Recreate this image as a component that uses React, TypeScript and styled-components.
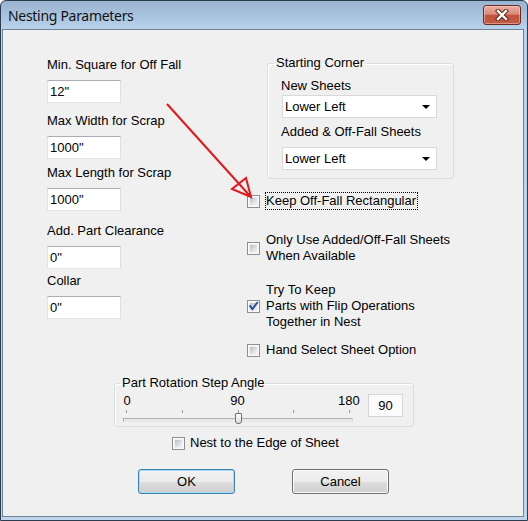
import React from "react";
import styled, { createGlobalStyle } from "styled-components";

const GlobalStyle = createGlobalStyle`
  html, body { margin: 0; padding: 0; background: #ffffff; }
  body { overflow: hidden; }
`;

const Window = styled.div`
  box-sizing: border-box;
  width: 528px;
  height: 521px;
  display: flex;
  flex-direction: column;
  padding: 0 3px 3px 1px;
  border: 1px solid #2d3c4e;
  border-radius: 6px 6px 0 0;
  background: linear-gradient(to bottom, #99b4d1 0px, #b9d1ea 28px, #bfd5ec 100%);
  font-family: "Liberation Sans", Arial, sans-serif;
  font-size: 13px;
  color: #000;
`;

const TitleBar = styled.div`
  flex: none;
  height: 28px;
  display: flex;
  align-items: flex-start;
  justify-content: space-between;
  padding: 0 3px 0 6px;
`;

const TitleText = styled.span`
  font-family: "Noto Sans", "Segoe UI", sans-serif;
  font-size: 14px;
  letter-spacing: -0.3px;
  line-height: 20px;
  margin-top: 5px;
  color: #111;
`;

const CloseButton = styled.div`
  box-sizing: border-box;
  width: 38px;
  height: 20px;
  margin-top: 4px;
  border: 1px solid #6b2a22;
  border-radius: 3px;
  background: linear-gradient(to bottom, #eab0a2 0%, #d98b7a 45%, #c4523c 52%, #c45c44 100%);
  box-shadow: inset 0 0 0 1px rgba(255, 220, 210, 0.45);
  display: flex;
  align-items: center;
  justify-content: center;
`;

const Body = styled.div`
  position: relative;
  flex: 1;
  display: flex;
  flex-direction: column;
  background: #f0f0f0;
  border: 1px solid #6f8399;
`;

const TopSection = styled.div`
  display: flex;
  align-items: flex-start;
  padding-left: 44px;
`;

const LeftColumn = styled.div`
  width: 200px;
  display: flex;
  flex-direction: column;
`;

const Field = styled.div<{ $top: number }>`
  display: flex;
  flex-direction: column;
  align-items: flex-start;
  margin-top: ${(p) => p.$top}px;
`;

const Label = styled.span<{ $gap?: number; $top?: number }>`
  line-height: 16px;
  white-space: nowrap;
  margin-top: ${(p) => p.$top ?? 0}px;
  margin-bottom: ${(p) => p.$gap ?? 7}px;
`;

const TextBox = styled.input`
  box-sizing: border-box;
  width: 74px;
  height: 23px;
  margin: 0;
  padding: 0 2px;
  border: 1px solid;
  border-color: #abadb3 #dbdfe6 #e3e9ef #e2e3ea;
  background: #fff;
  font-family: inherit;
  font-size: 13px;
  color: #000;
  outline: none;
`;

const RightColumn = styled.div`
  display: flex;
  flex-direction: column;
  padding-top: 25px;
`;

const Group = styled.fieldset<{ $width: number }>`
  box-sizing: border-box;
  width: ${(p) => p.$width}px;
  margin: 0;
  padding: 0;
  min-width: 0;
  border: 1px solid #d5dfe5;
  border-radius: 3px;
  box-shadow: inset 1px 1px 0 #ffffff;
`;

const Legend = styled.legend<{ $indent: number }>`
  margin-left: ${(p) => p.$indent}px;
  padding: 0 2px;
  line-height: 16px;
  white-space: nowrap;
`;

const CornerGroup = styled(Group)`
  margin-left: 20px;
`;

const CornerBody = styled.div`
  display: flex;
  flex-direction: column;
  align-items: flex-start;
  padding: 7px 0 8px 13px;
`;

const Select = styled.div<{ $top: number }>`
  box-sizing: border-box;
  width: 155px;
  height: 23px;
  margin: ${(p) => p.$top}px 0 0 1px;
  padding: 0 6px 0 2px;
  border: 1px solid #d9d9d9;
  background: #fff;
  display: flex;
  align-items: center;
  justify-content: space-between;
  line-height: 16px;
`;

const DropArrow = styled.span`
  width: 0;
  height: 0;
  border-left: 4px solid transparent;
  border-right: 4px solid transparent;
  border-top: 4px solid #000;
  margin-top: 1px;
`;

const CheckRow = styled.div<{ $top: number; $indent?: number; $gap?: number }>`
  display: flex;
  align-items: center;
  margin-top: ${(p) => p.$top}px;
  margin-left: ${(p) => p.$indent ?? 0}px;

  & > span:last-child {
    margin-left: ${(p) => p.$gap ?? 5}px;
  }
`;

const Box = styled.span`
  position: relative;
  box-sizing: border-box;
  flex: none;
  width: 13px;
  height: 13px;
  padding: 2px;
  border: 1px solid #8e8f8f;
  background: linear-gradient(135deg, #b9bec5 0%, #dcdfe3 55%, #f4f4f4 100%) content-box, #f2f2f2;
  box-shadow: inset 0 0 0 1px #fafafa;

  & > svg {
    position: absolute;
    left: -1px;
    top: -1px;
  }
`;

const CheckText = styled.span<{ $focused?: boolean }>`
  line-height: 16px;
  white-space: nowrap;
  border: 1px dotted ${(p) => (p.$focused ? "#000" : "transparent")};
  padding-right: 1px;
`;

const SliderGroup = styled(Group)`
  margin: 16px 0 0 111px;
`;

const SliderBody = styled.div`
  display: flex;
  align-items: flex-start;
  padding: 0 0 2px 8px;
`;

const SliderArea = styled.div`
  width: 230px;
  display: flex;
  flex-direction: column;
  margin-top: 2px;
`;

const ScaleLabels = styled.div`
  display: flex;
  justify-content: space-between;
  margin: 0 -5px 0 -6px;
  line-height: 16px;

  & > span {
    width: 20px;
    text-align: center;
  }
`;

const Ticks = styled.div`
  display: flex;
  justify-content: space-between;
  height: 3px;
  margin: 1px 3px 0 3px;

  & > i {
    width: 1px;
    background: #9a9a9a;
  }
`;

const TrackArea = styled.div`
  position: relative;
  height: 11px;
`;

const Track = styled.div`
  box-sizing: border-box;
  height: 4px;
  margin-top: 5px;
  border: 1px solid;
  border-color: #b0b0b0 #dcdcdc #e8e8e8 #b0b0b0;
  background: #e7eaea;
`;

const Thumb = styled.div`
  position: absolute;
  top: 0;
  box-sizing: border-box;
  width: 7px;
  height: 11px;
  border: 1px solid #6f6f6f;
  border-radius: 1px 1px 3px 3px;
  background: linear-gradient(to bottom, #fdfdfd, #dedede);
`;

const ValueBox = styled.div`
  box-sizing: border-box;
  width: 35px;
  height: 23px;
  margin: 3px 0 0 15px;
  border: 1px solid #d6d6d6;
  background: #fbfbfb;
  display: flex;
  align-items: center;
  justify-content: center;
`;

const ButtonRow = styled.div`
  display: flex;
  gap: 57px;
  margin: 17px 0 0 135px;
`;

const Button = styled.button<{ $default?: boolean }>`
  box-sizing: border-box;
  width: 97px;
  height: 25px;
  margin: 0;
  padding: 0;
  border: 1px solid ${(p) => (p.$default ? "#3c7fb1" : "#707070")};
  border-radius: 3px;
  background: linear-gradient(to bottom, #f2f2f2 0%, #ebebeb 50%, #dddddd 51%, #cfcfcf 100%);
  box-shadow: inset 0 0 0 1px ${(p) => (p.$default ? "#a8dcf5" : "#fcfcfc")};
  font-family: inherit;
  font-size: 13px;
  color: #000;
`;

const ArrowOverlay = styled.svg`
  position: absolute;
  left: 0;
  top: 0;
  width: 100%;
  height: 100%;
  pointer-events: none;
`;

function CheckBox({ checked }: { checked?: boolean }) {
  return (
    <Box>
      {checked && (
        <svg width="13" height="13" viewBox="0 0 13 13">
          <path d="M3.2 6.2 L5.4 9 L10.2 2.8" fill="none" stroke="#2c4f9e" strokeWidth="2" strokeLinecap="square" />
        </svg>
      )}
    </Box>
  );
}

function CloseGlyph() {
  return (
    <svg width="14" height="12" viewBox="0 0 14 12">
      <path d="M3 2 L11 10 M11 2 L3 10" stroke="#5b2019" strokeWidth="4.4" strokeLinecap="square" />
      <path d="M3 2 L11 10 M11 2 L3 10" stroke="#ffffff" strokeWidth="2.4" strokeLinecap="square" />
    </svg>
  );
}

const fields = [
  { label: "Min. Square for Off Fall", value: '12"', top: 27 },
  { label: "Max Width for Scrap", value: '1000"', top: 10 },
  { label: "Max Length for Scrap", value: '1000"', top: 6 },
  { label: "Add. Part Clearance", value: '0"', top: 12 },
  { label: "Collar", value: '0"', top: 4 },
];

const angle = { min: 0, max: 180, value: 90 };

export default function App() {
  const frac = (angle.value - angle.min) / (angle.max - angle.min);
  const thumbLeft = Math.round(3 + frac * 223 - 2.5);

  return (
    <>
      <GlobalStyle />
      <Window>
        <TitleBar>
          <TitleText>Nesting Parameters</TitleText>
          <CloseButton>
            <CloseGlyph />
          </CloseButton>
        </TitleBar>
        <Body>
          <TopSection>
            <LeftColumn>
              {fields.map((f) => (
                <Field key={f.label} $top={f.top}>
                  <Label>{f.label}</Label>
                  <TextBox readOnly value={f.value} />
                </Field>
              ))}
            </LeftColumn>
            <RightColumn>
              <CornerGroup $width={187}>
                <Legend $indent={6}>Starting Corner</Legend>
                <CornerBody>
                  <Label $gap={0}>New Sheets</Label>
                  <Select $top={1}>
                    Lower Left
                    <DropArrow />
                  </Select>
                  <Label $gap={0} $top={6}>
                    Added &amp; Off-Fall Sheets
                  </Label>
                  <Select $top={7}>
                    Lower Left
                    <DropArrow />
                  </Select>
                </CornerBody>
              </CornerGroup>
              <CheckRow $top={13}>
                <CheckBox />
                <CheckText $focused>Keep Off-Fall Rectangular</CheckText>
              </CheckRow>
              <CheckRow $top={21}>
                <CheckBox />
                <CheckText>
                  Only Use Added/Off-Fall Sheets
                  <br />
                  When Available
                </CheckText>
              </CheckRow>
              <CheckRow $top={16}>
                <CheckBox checked />
                <CheckText>
                  Try To Keep
                  <br />
                  Parts with Flip Operations
                  <br />
                  Together in Nest
                </CheckText>
              </CheckRow>
              <CheckRow $top={10}>
                <CheckBox />
                <CheckText>Hand Select Sheet Option</CheckText>
              </CheckRow>
            </RightColumn>
          </TopSection>

          <SliderGroup $width={300}>
            <Legend $indent={5}>Part Rotation Step Angle</Legend>
            <SliderBody>
              <SliderArea>
                <ScaleLabels>
                  <span>{angle.min}</span>
                  <span>{(angle.min + angle.max) / 2}</span>
                  <span>{angle.max}</span>
                </ScaleLabels>
                <Ticks>
                  <i />
                  <i />
                  <i />
                  <i />
                  <i />
                </Ticks>
                <TrackArea>
                  <Track />
                  <Thumb style={{ left: thumbLeft }} />
                </TrackArea>
              </SliderArea>
              <ValueBox>{angle.value}</ValueBox>
            </SliderBody>
          </SliderGroup>

          <CheckRow $top={7} $indent={169} $gap={4}>
            <CheckBox />
            <CheckText>Nest to the Edge of Sheet</CheckText>
          </CheckRow>

          <ButtonRow>
            <Button $default>OK</Button>
            <Button>Cancel</Button>
          </ButtonRow>

          <ArrowOverlay viewBox="0 0 520 486" preserveAspectRatio="none">
            <g stroke="#e3171c" strokeWidth="2" fill="none" strokeLinejoin="miter">
              <path d="M164 74 L247 166" />
              <path d="M248 167 L243 148 L229 159 Z" />
            </g>
          </ArrowOverlay>
        </Body>
      </Window>
    </>
  );
}
